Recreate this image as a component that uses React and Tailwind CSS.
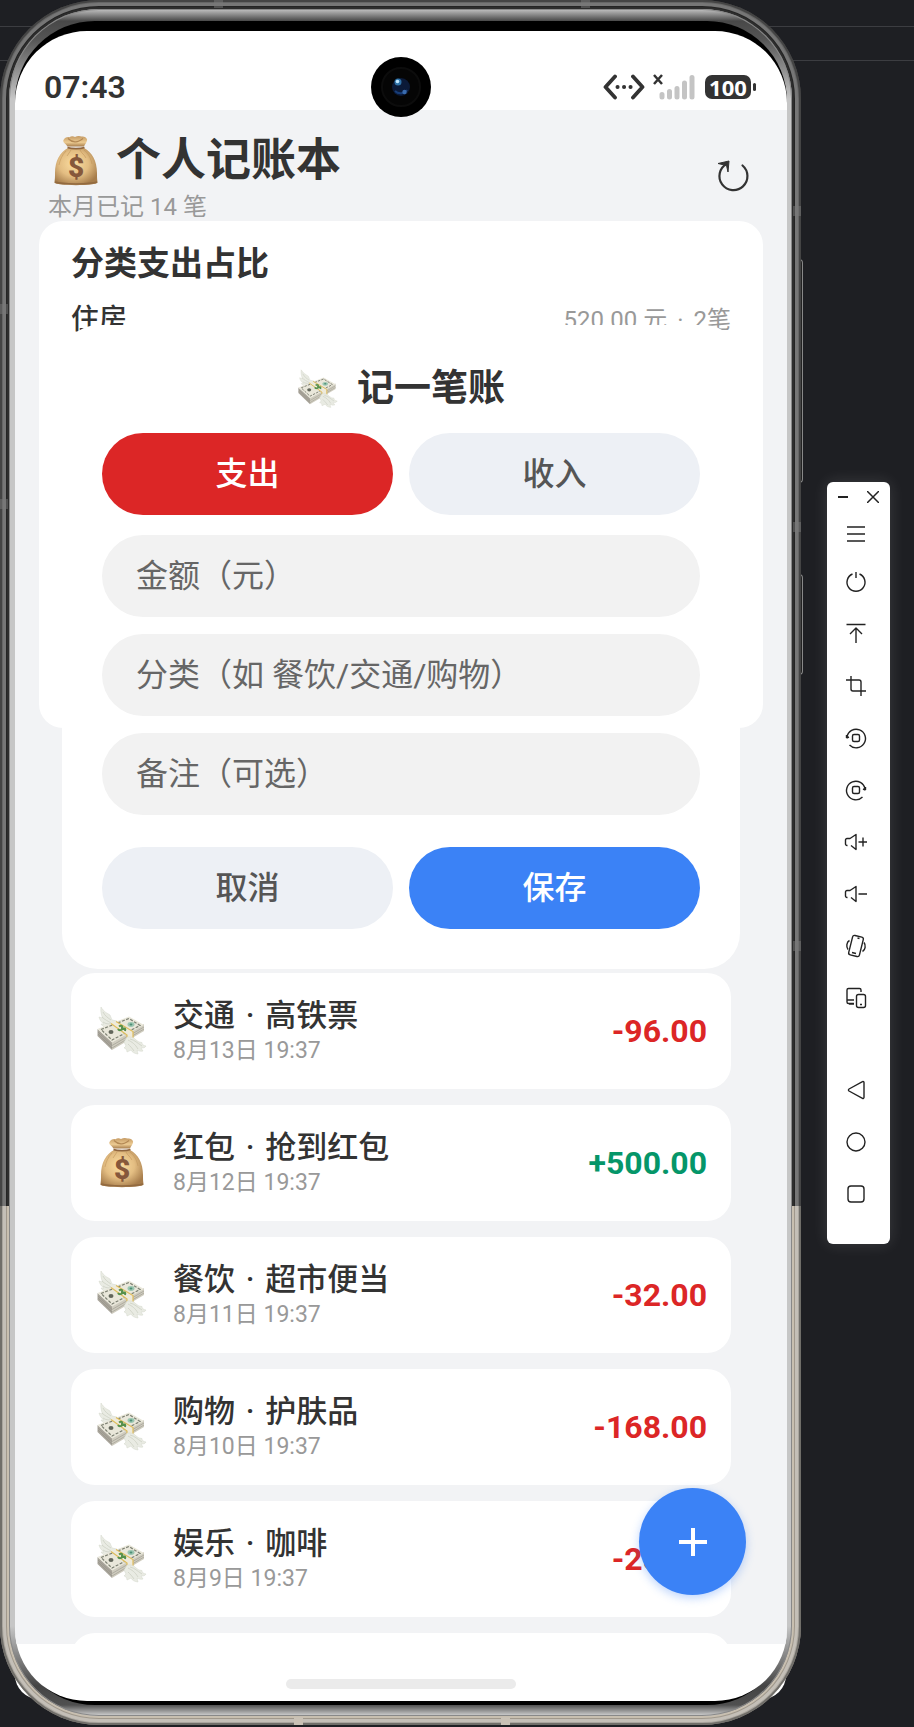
import { useState } from 'react';

const records = [
  { id: 1, type: 'expense', category: '交通', note: '高铁票', date: '8月13日 19:37', amount: '-96.00' },
  { id: 2, type: 'income', category: '红包', note: '抢到红包', date: '8月12日 19:37', amount: '+500.00' },
  { id: 3, type: 'expense', category: '餐饮', note: '超市便当', date: '8月11日 19:37', amount: '-32.00' },
  { id: 4, type: 'expense', category: '购物', note: '护肤品', date: '8月10日 19:37', amount: '-168.00' },
  { id: 5, type: 'expense', category: '娱乐', note: '咖啡', date: '8月9日 19:37', amount: '-28.00' },
];

function MoneyBag({ className }) {
  return (
    <svg viewBox="0 0 44 50" className={className} aria-hidden="true">
      <defs>
        <radialGradient id="bag" cx="0.45" cy="0.42" r="0.62">
          <stop offset="0" stopColor="#fbdda0" />
          <stop offset="0.55" stopColor="#e3bd82" />
          <stop offset="1" stopColor="#a67c4b" />
        </radialGradient>
        <linearGradient id="neck" x1="0" y1="0" x2="0" y2="1">
          <stop offset="0" stopColor="#c59a63" />
          <stop offset="0.6" stopColor="#eccb92" />
          <stop offset="1" stopColor="#a87d4c" />
        </linearGradient>
      </defs>
      <path d="M14 12C6 16 1 25 1 37c0 4 0 6-.6 9.500C.3 50 43.700 50 43.600 46.500 43 43 43 41 43 37 43 25 38 16 30 12z" fill="url(#bag)" />
      <path d="M13.500 10.500C11 7 8.500 6.500 9.500 4c1-2 4-3.500 6-2.700 1.500-1.500 4-1.300 5.500-.300 2-1 4.500-1.300 6.500-.400 2-.6 5 .6 5.500 2.700.5 2.500-2 4.500-3 7.200z" fill="url(#neck)" />
      <path d="M14 2.500c2 2 5 3.500 7.500 3.300C24 6 27 4 29 2.500" stroke="#b38854" strokeWidth="1.200" fill="none" />
      <path d="M13.500 11.500c4 1.500 13 1.500 17 0" stroke="#8f6640" strokeWidth="1.800" fill="none" />
      <path d="M12 15c-4 4-6 9-7 14M17 14c-1 2-3 4-4 6M26 14c2 4 4 4 6 8M30 14c5 4 7 9 8 14" stroke="#c2965c" strokeWidth="1" fill="none" opacity="0.6" />
      <path d="M1 46c7 2.500 35 2.500 42 0" stroke="#926a40" strokeWidth="1.500" fill="none" />
      <text x="22" y="41" textAnchor="middle" fontFamily="Roboto, sans-serif" fontWeight="900" fontSize="28" fill="#86583b">$</text>
    </svg>
  );
}

function WingedMoney({ className }) {
  return (
    <svg viewBox="0 0 50 50" className={className} aria-hidden="true">
      <path d="M4 1c3 5 6 6 9 8l2 5 5 1-5 8c-5 1-9-2-11-5l3 .2C4 16 2.500 13.500 2 11l3.500 1C4 8 3.500 5 4 1z" fill="#e9ebe3" stroke="#d3d6cb" strokeWidth=".5" />
      <path d="M6 6c2 4 5 6 8 8M5 11c3 3 6 4 9 6M6 16c3 2 5 2 8 2" stroke="#cdd0c4" strokeWidth=".8" fill="none" />
      <path d="M.5 23v7L15 44v-8z" fill="#a9a59b" />
      <path d="M15 36v8l32-19v-7z" fill="#cfccbf" />
      <path d="M.5 23 32 10.500 47 19 15 36.500z" fill="#e9e7da" />
      <path d="M4 23.500 32 12.500l11 7L15 34z" fill="none" stroke="#7d8073" strokeWidth="1.200" strokeDasharray="3 1.500" />
      <path d="M1 26l14 13.500L47 21M1 28l14 14L47 23" stroke="#8f8d82" strokeWidth=".5" fill="none" />
      <ellipse cx="14" cy="26" rx="2.500" ry="2" fill="#62665b" />
      <ellipse cx="34" cy="18.500" rx="3.500" ry="2.400" fill="#9bc6b1" />
      <ellipse cx="34" cy="18.500" rx="1.400" ry="1" fill="#4e8f75" />
      <path d="M14 17.500 19 15.500 36 25.500 36 33 30 36 30 29z" fill="#eeeadb" />
      <path d="M14 17.500 30 29v7M19 15.500 36 25.500V33" stroke="#dfbd5b" strokeWidth="1.200" fill="none" />
      <path d="M22 20.500c2-1.500 4-.5 3 1s2 2 4 1M21 23c1 2 4 1 4 0s4-1 3 2" stroke="#56904a" strokeWidth="2" fill="none" />
      <path d="M30 31c4 0 7 0 9 3l3 2 3 .5c0 2 1 3 4 3.500-1 2-3 2-5 2l2 3c-3 .500-4 0-6-1l1 4c-4-.500-6-2-7-4l-4 2c0-3-2-4-3-4l2-2-2-4z" fill="#e9ebe3" stroke="#d3d6cb" strokeWidth=".5" />
      <path d="M31 34c4 2 7 4 10 9M33 33c5 1 7 4 12 7M31 38c2 2 4 4 6 7" stroke="#cdd0c4" strokeWidth=".8" fill="none" />
    </svg>
  );
}

function StatusIcons() {
  return (
    <div className="flex items-center">
      <svg viewBox="0 0 92 26" className="h-[26px] w-[92px]" fill="none" stroke="#333" aria-hidden="true">
        <path d="M12 2.500 2.500 13l9.500 10.500M30 2.500 39.500 13 30 23.500" strokeWidth="3.800" strokeLinecap="round" strokeLinejoin="round" />
        <path d="M14.500 13h.1M21 13h.1M27.500 13h.1" strokeWidth="4" strokeLinecap="round" />
        <path d="M51 1l8 9M59 1l-8 9" strokeWidth="2.500" />
        <path d="M59 20.500v2.500M66.500 17.500V23M74 14.500V23M81.500 9v14M89 3.500V23" stroke="#c4c4c4" strokeWidth="5" strokeLinecap="round" />
      </svg>
      <span className="ml-2.5 flex h-6 w-[46px] items-center justify-center rounded-[7px] bg-[#333] font-['Noto_Sans'] text-[22px] leading-6 font-bold text-white">
        100
      </span>
      <span className="ml-0.5 h-2 w-[3px] rounded-full bg-[#333]" />
    </div>
  );
}

const tools = [
  { label: '电源', d: <path d="M12 2v6M8.500 4a9 9 0 1 0 7 0" /> },
  { label: '上滑', d: <path d="M2.500 2.500h19M12 21V6M6 12l6-6 6 6" /> },
  { label: '截屏', d: <path d="M2 6h13a2 2 0 0 1 2 2v14M7 2v13a2 2 0 0 0 2 2h13" /> },
  { label: '向左旋转', d: <><path d="M3 11A9.300 9.300 0 1 1 5.500 19M2.500 12V9M2.500 12l2.500-1" /><rect x="8.500" y="8.500" width="7" height="7" rx="1.500" /></> },
  { label: '向右旋转', d: <><path d="M21 11A9.300 9.300 0 1 0 18.500 19M21.500 12V9M21.500 12l-2.500-1" /><rect x="8.500" y="8.500" width="7" height="7" rx="1.500" /></> },
  { label: '音量加', d: <path d="M3.500 15.500H3A1.500 1.500 0 0 1 1.500 14v-4A1.500 1.500 0 0 1 3 8.500h3L12 4.500v15l-5-4M14.500 12h8.500M19 7.500v9" /> },
  { label: '音量减', d: <path d="M3.500 15.500H3A1.500 1.500 0 0 1 1.500 14v-4A1.500 1.500 0 0 1 3 8.500h3L12 4.500v15l-5-4M14.500 12h8.500" /> },
  { label: '摇一摇', d: <><rect x="6.500" y="2" width="11" height="20" rx="2" transform="rotate(14 12 12)" /><path d="M8 18.500l4 1M13.500 4l2 .500M5.500 6.500C2.500 8 2 13 4 15.500M18.500 17.500C21.500 16 22 11 20 8.500" /></> },
  { label: '多设备', d: <><path d="M17 6V4a1.500 1.500 0 0 0-1.500-1.500h-11A1.500 1.500 0 0 0 3 4v12a1.500 1.500 0 0 0 1.500 1.500H10M3 14h7M5 18h5" /><rect x="12.500" y="8.500" width="9" height="13" rx="2" /><path d="M16 18.500h2" /></> },
];

const navTools = [
  { label: '返回', d: <path d="M20 4.500v15a1 1 0 0 1-1.500.8L5 13a1.200 1.200 0 0 1 0-2l13.500-7.300a1 1 0 0 1 1.500.8z" /> },
  { label: '主页', d: <circle cx="12" cy="12" r="9" /> },
  { label: '最近任务', d: <rect x="4" y="4" width="16" height="16" rx="3" /> },
];

function ToolButton({ label, className = 'h-[52px]', children }) {
  return (
    <button type="button" aria-label={label} className={`flex w-full items-center justify-center ${className}`}>
      <svg viewBox="0 0 24 24" className="size-6" fill="none" stroke="#222" strokeWidth="1.400" strokeLinejoin="round">
        {children}
      </svg>
    </button>
  );
}

function RecordRow({ record }) {
  const isIncome = record.type === 'income';
  return (
    <li className="flex h-[116px] items-center gap-6 rounded-3xl bg-white px-6">
      {isIncome ? <MoneyBag className="h-[50px] w-[54px]" /> : <WingedMoney className="h-[50px] w-[54px]" />}
      <div className="flex-1">
        <p className="text-[31px] leading-10 font-medium">
          {record.category}
          <span className="mx-[3px]"> · </span>
          {record.note}
        </p>
        <p className="text-[23px] leading-[30px] text-[#999]">{record.date}</p>
      </div>
      <span className={`text-[32px] font-bold ${isIncome ? 'text-[#059669]' : 'text-[#dc2626]'}`}>{record.amount}</span>
    </li>
  );
}

function RecordDialog() {
  const [type, setType] = useState('expense');
  const active = 'bg-[#dc2626] text-white';
  const idle = 'bg-[#edf0f5] text-[#555]';
  const field = 'h-[82px] w-full rounded-full bg-[#f2f2f2] px-[34px] text-[32px] placeholder:text-[#666] outline-none';

  return (
    <form
      role="dialog"
      aria-label="记一笔账"
      className="absolute inset-x-[23px] top-[104px] flex flex-col rounded-[36px] bg-white px-10 pt-11 pb-10"
      onSubmit={(e) => e.preventDefault()}
    >
      <h2 className="mb-6 flex items-center justify-center gap-[18px] text-[37px] leading-10 font-bold">
        <WingedMoney className="h-10 w-[42px]" />
        记一笔账
      </h2>
      <div className="mb-5 flex gap-4 text-[32px] font-medium">
        <button type="button" onClick={() => setType('expense')} className={`h-[82px] flex-1 rounded-full ${type === 'expense' ? active : idle}`}>
          支出
        </button>
        <button type="button" onClick={() => setType('income')} className={`h-[82px] flex-1 rounded-full ${type === 'income' ? active : idle}`}>
          收入
        </button>
      </div>
      <div className="flex flex-col gap-[17px]">
        <input aria-label="金额" placeholder="金额（元）" className={field} />
        <input aria-label="分类" placeholder="分类（如 餐饮/交通/购物）" className={field} />
        <input aria-label="备注" placeholder="备注（可选）" className={field} />
      </div>
      <div className="mt-8 flex gap-4 text-[32px] font-medium">
        <button type="button" className="h-[82px] flex-1 rounded-full bg-[#edf0f5] text-[#555]">取消</button>
        <button type="submit" className="h-[82px] flex-1 rounded-full bg-[#3b82f6] text-white">保存</button>
      </div>
    </form>
  );
}

function Screen() {
  return (
    <div className="relative overflow-hidden rounded-[72px] bg-white text-[#333]">
      {/* Status bar */}
      <div className="flex h-[79px] items-center justify-between pt-[33px] pr-[31px] pl-[29px]">
        <span className="text-[32px] leading-8 font-semibold">07:43</span>
        <StatusIcons />
      </div>
      <div className="absolute top-[26px] left-1/2 flex size-[60px] -translate-x-1/2 items-center justify-center rounded-full bg-black">
        <svg viewBox="0 0 40 40" className="size-10" aria-hidden="true">
          <circle cx="20" cy="20" r="19" fill="#050505" stroke="#0c0c0c" strokeWidth="2" />
          <circle cx="20" cy="20" r="9" fill="#0b1a38" />
          <path d="M14 24a8 8 0 0 0 12-1" stroke="#173d78" strokeWidth="2" fill="none" />
          <circle cx="17" cy="15" r="3.500" fill="#2f73a8" />
          <circle cx="16.500" cy="14.500" r="1.800" fill="#bfe6ff" />
          <circle cx="23.500" cy="25" r="2.200" fill="#3a6cae" />
        </svg>
      </div>

      <main className="bg-[#f2f3f5]">
        {/* Title */}
        <header className="flex h-[111px] items-center justify-between pr-[38px] pl-[33px]">
          <div className="pt-[22px]">
            <h1 className="flex items-center gap-[18px] pl-1.5 text-[45px] leading-[60px] font-bold">
              <MoneyBag className="h-[50px] w-11" />
              个人记账本
            </h1>
            <p className="text-2xl leading-8 text-[#999]">本月已记 14 笔</p>
          </div>
          <button type="button" aria-label="刷新" className="mt-5">
            <svg viewBox="0 0 32 32" className="size-8" fill="none" stroke="#333" strokeWidth="2.200">
              <path d="M25.500 5.500A14 14 0 1 1 9.500 4" strokeLinecap="round" />
              <path d="M1 3.500 12 1l-1 11-1.500-6.500z" fill="#333" strokeWidth="1" />
            </svg>
          </button>
        </header>

        <div className="relative mx-6">
          <section className="min-h-[507px] rounded-3xl bg-white px-8 pt-5">
            <h2 className="text-[33px] leading-[46px] font-bold">分类支出占比</h2>
            <div className="flex items-center justify-between pt-[13px] leading-10">
              <span className="text-[28px] font-medium">住房</span>
              <span className="text-2xl text-[#999]">
                520.00 元
                <span className="mx-1"> · </span>
                2笔
              </span>
            </div>
          </section>
          <RecordDialog />
        </div>

        {/* Records */}
        <ul className="mt-[245px] flex flex-col gap-4 px-14">
          {records.map((r) => (
            <RecordRow key={r.id} record={r} />
          ))}
          <li className="h-[11px] overflow-hidden">
            <div className="h-[116px] rounded-3xl bg-white" />
          </li>
        </ul>
      </main>

      <button
        type="button"
        aria-label="记一笔"
        className="absolute right-[41px] bottom-[106px] flex size-[107px] items-center justify-center rounded-full bg-[#3b82f6] shadow-[0_3px_10px_#3b82f655]"
      >
        <svg viewBox="0 0 28 28" className="size-7" stroke="#fff" strokeWidth="4" aria-hidden="true">
          <path d="M14 0v28M0 14h28" />
        </svg>
      </button>

      <div className="flex h-[57px] items-end justify-center pb-3">
        <div className="h-2.5 w-[230px] rounded-full bg-[#ebebeb]" />
      </div>
    </div>
  );
}

export default function App() {
  return (
    <div className="relative isolate flex min-h-screen items-start gap-[26px] overflow-hidden bg-[#1e1f23] pr-6 font-[Roboto,'Noto_Sans_CJK_SC',sans-serif]">
      {/* Editor chrome behind the emulator */}
      <div className="absolute inset-x-0 top-[26px] -z-10 h-[35px] border-y border-[#3c3d41]" />

      {/* Phone */}
      <div className="relative min-w-0 flex-1">
        <div className="absolute inset-x-[15px] bottom-[26px] -z-10 h-24 rounded-b-3xl bg-white" />
        <div className="absolute top-[259px] -right-0.5 h-[224px] w-1 rounded-r-sm border border-[#888] bg-[#222]" />
        <div className="absolute top-[574px] -right-0.5 h-[101px] w-1 rounded-r-sm border border-[#888] bg-[#222]" />
        <div className="relative rounded-[99px] bg-[linear-gradient(to_bottom,#2d2d2d_0,#2d2d2d_1206px,#c8bfb0_1206px,#c8bfb0_100%)] p-[9px] shadow-[inset_0_0_0_2px_#00000055,inset_0_0_0_3px_#00000022,inset_0_0_0_6px_#ffffff60,inset_0_0_0_7px_#00000033]">
          <div className="rounded-[90px] bg-[linear-gradient(to_bottom,#c4c4c4_0,#484848_12px,#555_30px,#c6c6c6_90px,#c6c6c6_calc(100%-90px),#444_calc(100%-30px),#505050_calc(100%-11px),#d4d4d4_100%)] pt-3 pr-[5px] pb-[11px] pl-1.5 shadow-[inset_0_0_0_1px_#888]">
            <div className="rounded-[80px] bg-black pt-2.5 pb-1">
              <Screen />
            </div>
          </div>
        </div>
        {/* Antenna breaks */}
        <div className="absolute top-0 left-[214px] h-2 w-[9px] bg-[#777]/50" />
        <div className="absolute top-0 right-[211px] h-2 w-[9px] bg-[#777]/50" />
        <div className="absolute top-[304px] left-0 h-[10px] w-2 bg-[#777]/50" />
        <div className="absolute top-[499px] left-0 h-[10px] w-2 bg-[#777]/50" />
        <div className="absolute top-[206px] right-0 h-[10px] w-2 bg-[#777]/50" />
        <div className="absolute top-[522px] right-0 h-[10px] w-2 bg-[#777]/50" />
        <div className="absolute top-[941px] right-0 h-[10px] w-2 bg-[#777]/50" />
        <div className="absolute bottom-0 left-[294px] h-2 w-[9px] bg-[#c9c1b5]" />
        <div className="absolute right-[291px] bottom-0 h-2 w-[9px] bg-[#c9c1b5]" />
      </div>

      {/* Emulator toolbar */}
      <aside className="mt-[482px] flex w-[63px] flex-col rounded-md bg-white pb-6 shadow-[0_0_16px_#ffffff22]">
        <div className="flex h-[30px] items-center justify-between px-[11px]">
          <button type="button" aria-label="最小化">
            <svg viewBox="0 0 10 12" className="h-3 w-2.5" stroke="#222" strokeWidth="2">
              <path d="M0 6h10" />
            </svg>
          </button>
          <button type="button" aria-label="关闭">
            <svg viewBox="0 0 12 12" className="size-3" stroke="#222" strokeWidth="1.500">
              <path d="M0 0l12 12M12 0 0 12" />
            </svg>
          </button>
        </div>
        <div className="pr-1.5">
          <ToolButton label="菜单" className="h-11">
            <path d="M3 5h18M3 12h18M3 19h18" />
          </ToolButton>
          {tools.map((t) => (
            <ToolButton key={t.label} label={t.label}>{t.d}</ToolButton>
          ))}
        </div>
        <div className="mt-10 pr-1.5">
          {navTools.map((t) => (
            <ToolButton key={t.label} label={t.label}>{t.d}</ToolButton>
          ))}
        </div>
      </aside>
    </div>
  );
}
